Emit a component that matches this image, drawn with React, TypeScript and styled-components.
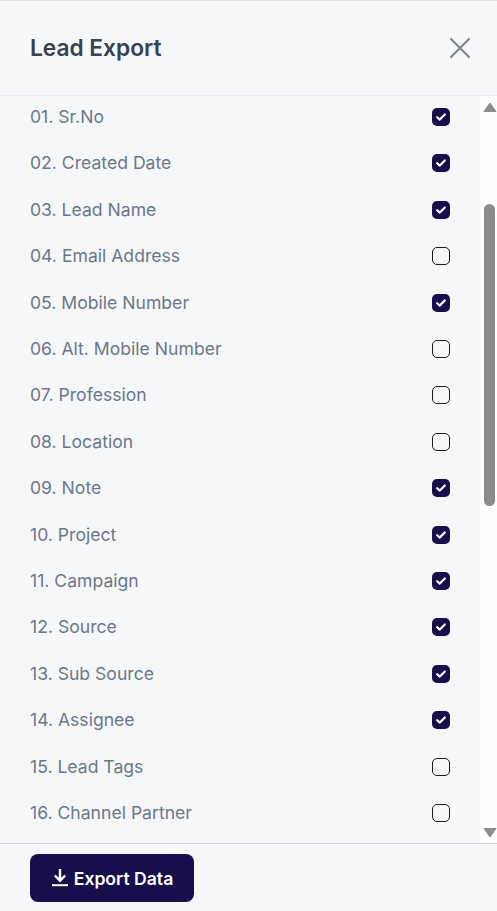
import React from "react";
import styled, { createGlobalStyle } from "styled-components";

const Global = createGlobalStyle`
  html, body { margin: 0; padding: 0; background: #f6f7f9; }
  * { box-sizing: border-box; }
`;

const Panel = styled.div`
  width: 497px;
  height: 911px;
  display: flex;
  flex-direction: column;
  background: #f6f7f9;
  border-top: 1px solid #e2e3e3;
  font-family: Inter, sans-serif;
  overflow: hidden;
`;

const Header = styled.header`
  height: 95px;
  flex: none;
  display: flex;
  align-items: center;
  justify-content: space-between;
  padding: 0 26px 0 30px;
  border-bottom: 1px solid #e9ebef;
`;

const Title = styled.h1`
  margin: 0;
  font-size: 22.7px;
  line-height: 28px;
  font-weight: 600;
  color: #374151;
`;

const CloseButton = styled.button`
  width: 22px;
  height: 22px;
  padding: 0;
  border: 0;
  background: none;
  display: flex;
`;

const Body = styled.div`
  flex: 1;
  min-height: 0;
  display: flex;
`;

const List = styled.ul`
  flex: 1;
  margin: 0;
  padding: 0 30px;
  list-style: none;
  overflow: hidden;
`;

const Row = styled.li`
  height: 46.4px;
  display: flex;
  align-items: center;
  justify-content: space-between;
  &:first-child { margin-top: -2.1px; }
`;

const Label = styled.span`
  font-size: 17.6px;
  line-height: 20px;
  color: #6b7789;
`;

const Box = styled.span<{ $checked: boolean }>`
  width: 18px;
  height: 18px;
  border-radius: 5px;
  display: flex;
  align-items: center;
  justify-content: center;
  background: ${(p) => (p.$checked ? "#170f4b" : "transparent")};
  border: ${(p) => (p.$checked ? "none" : "1.5px solid #1a1a1a")};
`;

const Scrollbar = styled.div`
  width: 17px;
  flex: none;
  background: #fdfdfd;
  display: flex;
  flex-direction: column;
  align-items: center;
  position: relative;
  padding: 6px 0 5px;
  justify-content: space-between;
`;

const Thumb = styled.div`
  position: absolute;
  top: 108px;
  left: 4px;
  width: 11px;
  height: 302px;
  border-radius: 6px;
  background: #8c8c8c;
`;

const Arrow = styled.svg`
  display: block;
  margin-left: 3px;
`;

const Footer = styled.footer`
  height: 68px;
  flex: none;
  border-top: 1px solid #d3d5d8;
  padding: 10px 30px;
`;

const ExportButton = styled.button`
  width: 164px;
  height: 48px;
  border: 0;
  border-radius: 8px;
  background: #170f4b;
  color: #fff;
  font-family: Inter, sans-serif;
  font-size: 17.6px;
  font-weight: 600;
  display: flex;
  align-items: center;
  justify-content: center;
  gap: 6px;
  padding: 0 0 0 1px;
`;

const rows: [string, boolean][] = [
  ["01. Sr.No", true],
  ["02. Created Date", true],
  ["03. Lead Name", true],
  ["04. Email Address", false],
  ["05. Mobile Number", true],
  ["06. Alt. Mobile Number", false],
  ["07. Profession", false],
  ["08. Location", false],
  ["09. Note", true],
  ["10. Project", true],
  ["11. Campaign", true],
  ["12. Source", true],
  ["13. Sub Source", true],
  ["14. Assignee", true],
  ["15. Lead Tags", false],
  ["16. Channel Partner", false],
];

export default function App() {
  return (
    <>
      <Global />
      <Panel>
        <Header>
          <Title>Lead Export</Title>
          <CloseButton aria-label="Close">
            <svg width="22" height="22" viewBox="0 0 22 22" fill="none">
              <path d="M2 2L20 20M20 2L2 20" stroke="#7f8285" strokeWidth="2" strokeLinecap="round" />
            </svg>
          </CloseButton>
        </Header>
        <Body>
          <List>
            {rows.map(([label, checked]) => (
              <Row key={label}>
                <Label>{label}</Label>
                <Box $checked={checked}>
                  {checked && (
                    <svg width="10" height="8" viewBox="0 0 10 8" fill="none">
                      <path d="M1.2 4.2L3.8 6.6L8.8 1.5" stroke="#fff" strokeWidth="2.2" strokeLinecap="round" strokeLinejoin="round" />
                    </svg>
                  )}
                </Box>
              </Row>
            ))}
          </List>
          <Scrollbar>
            <Arrow width="14" height="10" viewBox="0 0 14 10">
              <path d="M7 1L13 9.5H1Z" fill="#8c8c8c" stroke="#8c8c8c" strokeWidth="1" strokeLinejoin="round" />
            </Arrow>
            <Thumb />
            <Arrow width="14" height="10" viewBox="0 0 14 10">
              <path d="M7 9L13 0.5H1Z" fill="#8c8c8c" stroke="#8c8c8c" strokeWidth="1" strokeLinejoin="round" />
            </Arrow>
          </Scrollbar>
        </Body>
        <Footer>
          <ExportButton>
            <svg width="16" height="18" viewBox="0 0 16 18" fill="none">
              <path d="M8 0V12M2.8 6.5L8 11.7L13.2 6.5" stroke="#fff" strokeWidth="2.4" strokeLinejoin="miter" />
              <path d="M0 16.2H16" stroke="#fff" strokeWidth="2" />
            </svg>
            Export Data
          </ExportButton>
        </Footer>
      </Panel>
    </>
  );
}
